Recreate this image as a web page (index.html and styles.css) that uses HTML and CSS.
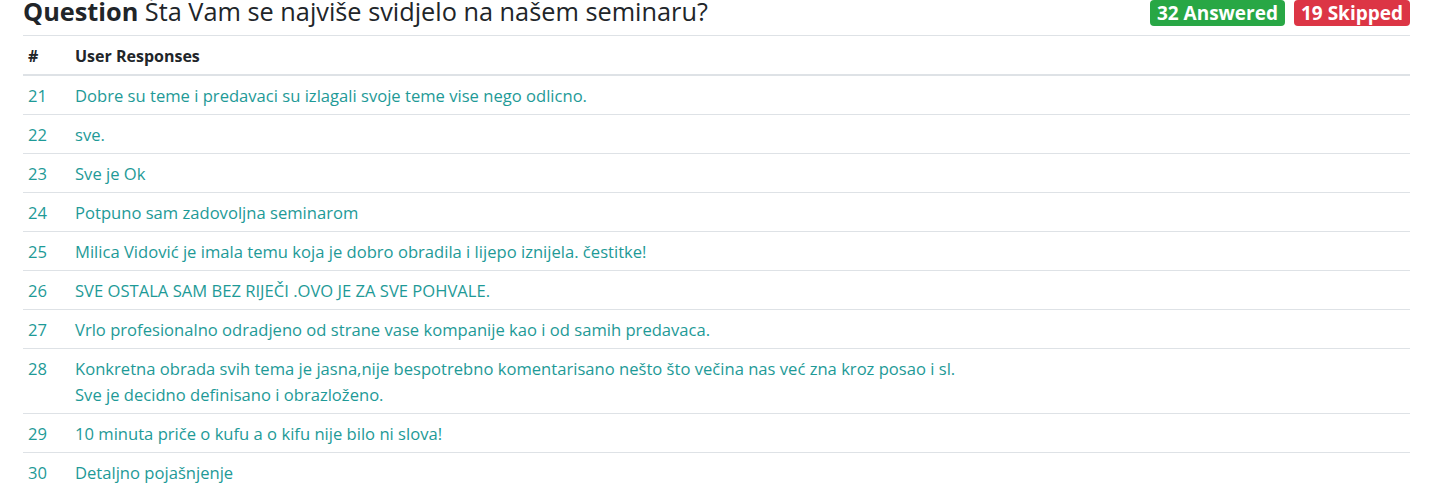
FILE: index.html
```html
<!DOCTYPE html>
<html lang="en">
<head>
    <meta charset="UTF-8">
    <meta name="viewport" content="width=device-width, initial-scale=1.0">
    <title>Question responses</title>
    <link rel="stylesheet" href="styles.css">
</head>
<body>
    <div class="question-box">
        <div class="question-head">
            <h2 class="question-title"><b>Question</b> Śta Vam se najviše svidjelo na našem seminaru?</h2>
            <div class="badges">
                <span class="badge badge-green">32 Answered</span>
                <span class="badge badge-red">19 Skipped</span>
            </div>
        </div>
        <table class="responses">
            <thead>
                <tr>
                    <th class="num">#</th>
                    <th>User Responses</th>
                </tr>
            </thead>
            <tbody>
                <tr><td class="num">21</td><td>Dobre su teme i predavaci su izlagali svoje teme vise nego odlicno.</td></tr>
                <tr><td class="num">22</td><td>sve.</td></tr>
                <tr><td class="num">23</td><td>Sve je Ok</td></tr>
                <tr><td class="num">24</td><td>Potpuno sam zadovoljna seminarom</td></tr>
                <tr><td class="num">25</td><td>Milica Vidović je imala temu koja je dobro obradila i lijepo iznijela. čestitke!</td></tr>
                <tr><td class="num">26</td><td>SVE OSTALA SAM BEZ RIJEČI .OVO JE ZA SVE POHVALE.</td></tr>
                <tr><td class="num">27</td><td>Vrlo profesionalno odradjeno od strane vase kompanije kao i od samih predavaca.</td></tr>
                <tr><td class="num">28</td><td>Konkretna obrada svih tema je jasna,nije bespotrebno komentarisano nešto što večina nas već zna kroz posao i sl.<br>Sve je decidno definisano i obrazloženo.</td></tr>
                <tr><td class="num">29</td><td>10 minuta priče o kufu a o kifu nije bilo ni slova!</td></tr>
                <tr><td class="num">30</td><td>Detaljno pojašnjenje</td></tr>
            </tbody>
        </table>
    </div>
</body>
</html>
```

FILE: styles.css
```css
body {
	margin: 0;
	font-family: "Open Sans", "Noto Sans", sans-serif;
	color: #212529;
	background: #fff;
}
.question-box {
	padding: 0 27px 0 23px;
}
.question-head {
	display: flex;
	justify-content: space-between;
	align-items: flex-start;
	margin-top: -7px;
	padding-bottom: 5px;
	border-bottom: 1px solid #dee2e6;
}
.question-title {
	margin: 0;
	font-size: 25.3px;
	font-weight: 400;
	line-height: 37px;
}
.question-title b {
	font-weight: 700;
}
.badges {
	display: flex;
	gap: 9px;
	margin-top: 7px;
}
.badge {
	display: inline-block;
	color: #fff;
	font-weight: 700;
	font-size: 19px;
	line-height: 26px;
	padding: 0 7px;
	border-radius: 4px;
}
.badge-green {
	background: #28a745;
}
.badge-red {
	background: #dc3545;
}
.responses {
	width: 100%;
	border-collapse: collapse;
	font-size: 16.6px;
}
.responses th,
.responses td {
	text-align: left;
	vertical-align: top;
	padding: 7px 5px 5px;
	line-height: 26px;
	border-top: 1px solid #dee2e6;
}
.responses thead th {
	border-top: 0;
	border-bottom: 2px solid #dee2e6;
	font-weight: 700;
	font-size: 16px;
	padding-top: 7px;
	padding-bottom: 5px;
}
.responses td {
	color: #1e9a97;
}
.responses .num {
	width: 37px;
}
```
